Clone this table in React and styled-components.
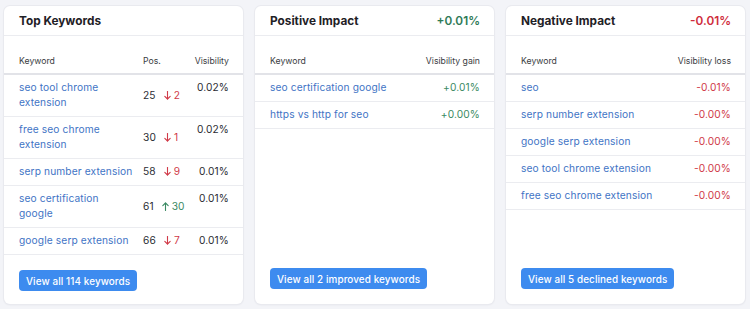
import React from 'react';
import styled, { createGlobalStyle } from 'styled-components';

const GlobalStyle = createGlobalStyle`
  html, body {
    margin: 0;
    padding: 0;
    background: #f3f4f8;
    font-family: Inter, "Noto Sans", sans-serif;
    color: #2b2d33;
  }
`;

const Page = styled.div`
  display: grid;
  grid-template-columns: repeat(3, 239px);
  gap: 12px;
  padding: 6px 5px 5px 4px;
  width: 750px;
  height: 309px;
  box-sizing: border-box;
`;

const Card = styled.section`
  background: #fff;
  border-radius: 6px;
  box-shadow: 0 0 0 1px #e9eaef, 0 1px 2px rgba(30, 35, 60, 0.08);
  display: flex;
  flex-direction: column;
  overflow: hidden;
`;

const Header = styled.div`
  flex-shrink: 0;
  display: flex;
  justify-content: space-between;
  align-items: center;
  height: 29px;
  padding: 0 14px 0 15px;
  border-bottom: 1px solid #ebecf0;
`;

const Title = styled.h2`
  margin: 0;
  font-size: 11.8px;
  font-weight: 700;
  color: #1f2126;
`;

const Delta = styled.span`
  font-size: 11.8px;
  font-weight: 600;
  color: ${p => (p.$neg ? '#cf2c3c' : '#2f7a57')};
`;

const Table = styled.table`
  flex-shrink: 0;
  width: 100%;
  border-collapse: collapse;
  font-size: 10.2px;
`;

const Th = styled.th`
  font-size: 8.7px;
  font-weight: 400;
  color: #3a3c42;
  text-align: ${p => p.$align || 'left'};
  width: ${p => p.$width || 'auto'};
  height: 30px;
  vertical-align: bottom;
  padding: 0 0 7px;
  border-bottom: 2px solid #e2e3e8;
  &:first-child { padding-left: 15px; }
  &:last-child { padding-right: 14px; }
`;

const Row = styled.tr`
  border-bottom: 1px solid #ebecf0;
`;

const Td = styled.td`
  padding: 5px 0 6px;
  line-height: 15px;
  vertical-align: ${p => p.$valign || 'top'};
  text-align: ${p => p.$align || 'left'};
  color: ${p => p.$color || '#2b2d33'};
  white-space: ${p => (p.$nowrap ? 'nowrap' : 'normal')};
  letter-spacing: 0.12px;
  &:first-child { padding-left: 15px; }
  &:last-child { padding-right: 14px; }
`;

const Link = styled.a`
  color: #3f74c5;
  text-decoration: none;
  display: block;
  max-width: ${p => p.$max || 'none'};
`;

const Change = styled.span`
  display: inline-flex;
  align-items: center;
  vertical-align: top;
  height: 15px;
  gap: 3px;
  margin-left: 8px;
  color: ${p => (p.$up ? '#3b8a63' : '#d03a48')};

  svg { display: block; }
`;

const Footer = styled.div`
  flex-shrink: 0;
  margin-top: auto;
  padding: 15px;
`;

const Button = styled.button`
  display: block;
  font-family: inherit;
  font-size: 9.9px;
  font-weight: 500;
  color: #fff;
  background: #3d8bef;
  border: none;
  border-radius: 4px;
  height: 21px;
  padding: 0 7px;
  letter-spacing: 0.1px;
`;

const Arrow = ({ up }) => (
  <svg width="7" height="9" viewBox="0 0 7 9" fill="none" stroke="currentColor" strokeWidth="1.1" strokeLinecap="round" strokeLinejoin="round">
    {up ? (
      <>
        <path d="M3.5 8.5V1" />
        <path d="M0.8 3.7L3.5 1L6.2 3.7" />
      </>
    ) : (
      <>
        <path d="M3.5 0.5V8" />
        <path d="M0.8 5.3L3.5 8L6.2 5.3" />
      </>
    )}
  </svg>
);

const topKeywords = [
  { kw: 'seo tool chrome extension', pos: 25, ch: 2, up: false, vis: '0.02%' },
  { kw: 'free seo chrome extension', pos: 30, ch: 1, up: false, vis: '0.02%' },
  { kw: 'serp number extension', pos: 58, ch: 9, up: false, vis: '0.01%' },
  { kw: 'seo certification google', pos: 61, ch: 30, up: true, vis: '0.01%' },
  { kw: 'google serp extension', pos: 66, ch: 7, up: false, vis: '0.01%' },
];

const positive = [
  { kw: 'seo certification google', val: '+0.01%' },
  { kw: 'https vs http for seo', val: '+0.00%' },
];

const negative = [
  { kw: 'seo', val: '-0.01%' },
  { kw: 'serp number extension', val: '-0.00%' },
  { kw: 'google serp extension', val: '-0.00%' },
  { kw: 'seo tool chrome extension', val: '-0.00%' },
  { kw: 'free seo chrome extension', val: '-0.00%' },
];

const ImpactCard = ({ title, total, neg, label, rows, button }) => (
  <Card>
    <Header>
      <Title>{title}</Title>
      <Delta $neg={neg}>{total}</Delta>
    </Header>
    <Table>
      <thead>
        <tr>
          <Th>Keyword</Th>
          <Th $align="right">{label}</Th>
        </tr>
      </thead>
      <tbody>
        {rows.map(r => (
          <Row key={r.kw}>
            <Td><Link href="#">{r.kw}</Link></Td>
            <Td $align="right" $valign="middle" $color={neg ? '#d03a48' : '#3b8a63'}>{r.val}</Td>
          </Row>
        ))}
      </tbody>
    </Table>
    <Footer>
      <Button>{button}</Button>
    </Footer>
  </Card>
);

const App = () => (
  <>
    <GlobalStyle />
    <Page>
      <Card>
        <Header>
          <Title>Top Keywords</Title>
        </Header>
        <Table>
          <thead>
            <tr>
              <Th $width="124px">Keyword</Th>
              <Th>Pos.</Th>
              <Th $align="right">Visibility</Th>
            </tr>
          </thead>
          <tbody>
            {topKeywords.map(r => (
              <Row key={r.kw}>
                <Td><Link href="#" $max="115px">{r.kw}</Link></Td>
                <Td $valign="middle" $nowrap>
                  {r.pos}
                  <Change $up={r.up}><Arrow up={r.up} />{r.ch}</Change>
                </Td>
                <Td $align="right">{r.vis}</Td>
              </Row>
            ))}
          </tbody>
        </Table>
        <Footer>
          <Button>View all 114 keywords</Button>
        </Footer>
      </Card>
      <ImpactCard
        title="Positive Impact"
        total="+0.01%"
        label="Visibility gain"
        rows={positive}
        button="View all 2 improved keywords"
      />
      <ImpactCard
        title="Negative Impact"
        total="-0.01%"
        neg
        label="Visibility loss"
        rows={negative}
        button="View all 5 declined keywords"
      />
    </Page>
  </>
);

export default App;
